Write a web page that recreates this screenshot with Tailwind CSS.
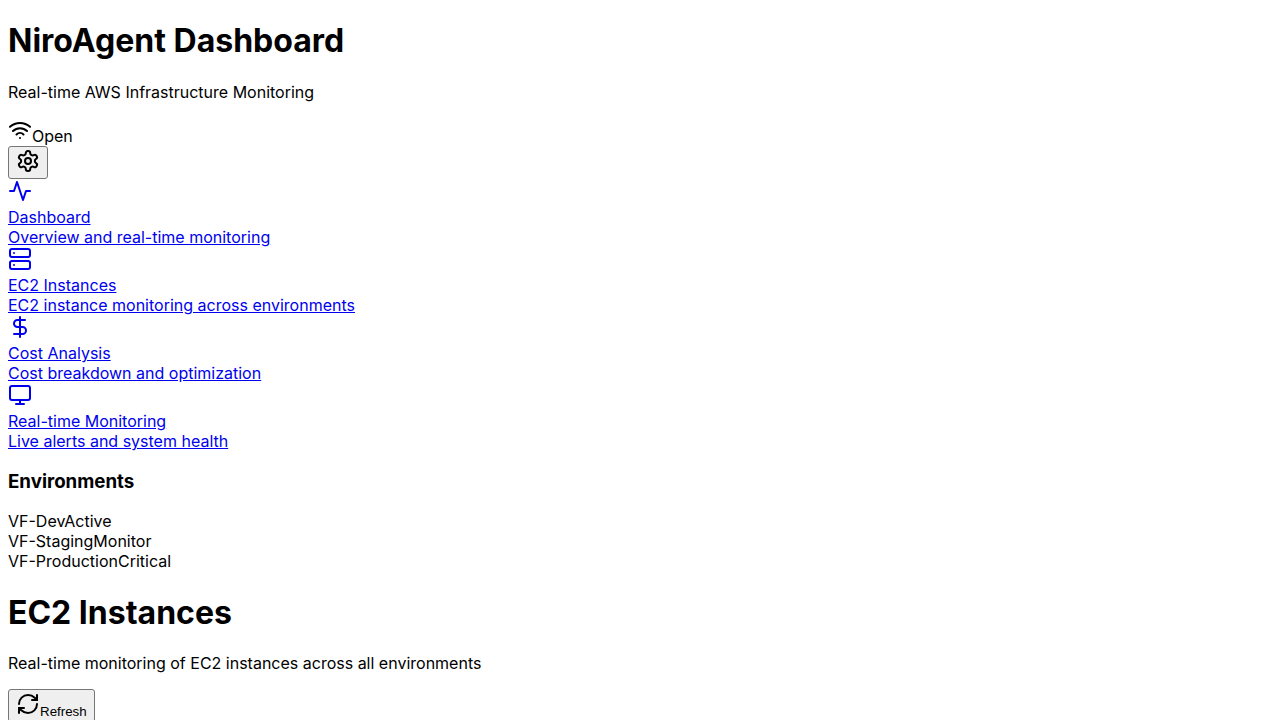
<!DOCTYPE html>
<html lang="en">
<head>
<meta charset="utf-8">
<title>NiroAgent Dashboard</title>
<script src="https://cdn.jsdelivr.net/npm/@tailwindcss/browser@4"></script>
</head>
<body class="h-[720px] overflow-hidden bg-white px-2 font-['Inter',sans-serif] text-base leading-5 text-black">
<header>
<h1 class="mt-[21.44px] text-[32px] leading-[normal] font-bold">NiroAgent Dashboard</h1>
<p class="mt-[21.44px]">Real-time AWS Infrastructure Monitoring</p>
<div class="mt-4 flex h-[28px] items-start"><svg class="size-6" viewBox="0 0 24 24" fill="none" stroke="currentColor" stroke-width="2" stroke-linecap="round" stroke-linejoin="round"><path d="M5 13a10 10 0 0 1 14 0"/><path d="M8.5 16.5a5 5 0 0 1 7 0"/><path d="M2 8.82a15 15 0 0 1 20 0"/><path d="M12 20h.01"/></svg><span class="mt-2">Open</span></div>
<button class="flex h-[33px] w-10 items-start justify-center rounded-[3px] border border-[#767676] bg-[#efefef] pt-[2px]"><svg class="size-6" viewBox="0 0 24 24" fill="none" stroke="currentColor" stroke-width="2" stroke-linecap="round" stroke-linejoin="round"><path d="M12.22 2h-.44a2 2 0 0 0-2 2v.18a2 2 0 0 1-1 1.73l-.43.25a2 2 0 0 1-2 0l-.15-.08a2 2 0 0 0-2.73.73l-.22.38a2 2 0 0 0 .73 2.73l.15.1a2 2 0 0 1 1 1.72v.51a2 2 0 0 1-1 1.74l-.15.09a2 2 0 0 0-.73 2.73l.22.38a2 2 0 0 0 2.73.73l.15-.08a2 2 0 0 1 2 0l.43.25a2 2 0 0 1 1 1.73V20a2 2 0 0 0 2 2h.44a2 2 0 0 0 2-2v-.18a2 2 0 0 1 1-1.73l.43-.25a2 2 0 0 1 2 0l.15.08a2 2 0 0 0 2.73-.73l.22-.39a2 2 0 0 0-.73-2.73l-.15-.08a2 2 0 0 1-1-1.74v-.5a2 2 0 0 1 1-1.74l.15-.09a2 2 0 0 0 .73-2.73l-.22-.38a2 2 0 0 0-2.73-.73l-.15.08a2 2 0 0 1-2 0l-.43-.25a2 2 0 0 1-1-1.73V4a2 2 0 0 0-2-2z"/><circle cx="12" cy="12" r="3"/></svg></button>
</header>
<nav class="text-[#0000ee]">
<a href="#" class="block h-[68px] underline"><svg class="mb-1 size-6" viewBox="0 0 24 24" fill="none" stroke="currentColor" stroke-width="2" stroke-linecap="round" stroke-linejoin="round"><path d="M22 12h-4l-3 9L9 3l-3 9H2"/></svg><div>Dashboard</div><div>Overview and real-time monitoring</div></a>
<a href="#" class="block h-[68px] underline"><svg class="mb-1 size-6" viewBox="0 0 24 24" fill="none" stroke="currentColor" stroke-width="2" stroke-linecap="round" stroke-linejoin="round"><rect width="20" height="8" x="2" y="2" rx="2"/><rect width="20" height="8" x="2" y="14" rx="2"/><path d="M6 6h.01M6 18h.01"/></svg><div>EC2 Instances</div><div>EC2 instance monitoring across environments</div></a>
<a href="#" class="block h-[68px] underline"><svg class="mb-1 size-6" viewBox="0 0 24 24" fill="none" stroke="currentColor" stroke-width="2" stroke-linecap="round" stroke-linejoin="round"><path d="M12 2v20"/><path d="M17 5H9.5a3.5 3.5 0 0 0 0 7h5a3.5 3.5 0 0 1 0 7H6"/></svg><div>Cost Analysis</div><div>Cost breakdown and optimization</div></a>
<a href="#" class="block h-[68px] underline"><svg class="mb-1 size-6" viewBox="0 0 24 24" fill="none" stroke="currentColor" stroke-width="2" stroke-linecap="round" stroke-linejoin="round"><rect width="20" height="14" x="2" y="3" rx="2"/><path d="M8 21h8M12 17v4"/></svg><div>Real-time Monitoring</div><div>Live alerts and system health</div></a>
</nav>
<section>
<h3 class="mt-[18.72px] text-[18.72px] leading-[23px] font-bold">Environments</h3>
<div class="mt-[18.72px]">
<div><span>VF-Dev</span><span>Active</span></div>
<div><span>VF-Staging</span><span>Monitor</span></div>
<div><span>VF-Production</span><span>Critical</span></div>
</div>
</section>
<main>
<h1 class="mt-[21.44px] text-[32px] leading-[normal] font-bold">EC2 Instances</h1>
<p class="mt-[21.44px]">Real-time monitoring of EC2 instances across all environments</p>
<button class="mt-4 flex h-[33px] w-[87px] items-start rounded-[3px] border border-[#767676] bg-[#efefef] pt-[2px] pl-[7px] font-['Liberation_Sans',sans-serif] text-[13.333px] leading-[15px]"><svg class="size-6" viewBox="0 0 24 24" fill="none" stroke="currentColor" stroke-width="2" stroke-linecap="round" stroke-linejoin="round"><path d="M3 12a9 9 0 0 1 9-9 9.75 9.75 0 0 1 6.74 2.74L21 8"/><path d="M21 3v5h-5"/><path d="M21 12a9 9 0 0 1-9 9 9.75 9.75 0 0 1-6.74-2.74L3 16"/><path d="M8 16H3v5"/></svg><span class="mt-3">Refresh</span></button>
</main>
</body>
</html>
